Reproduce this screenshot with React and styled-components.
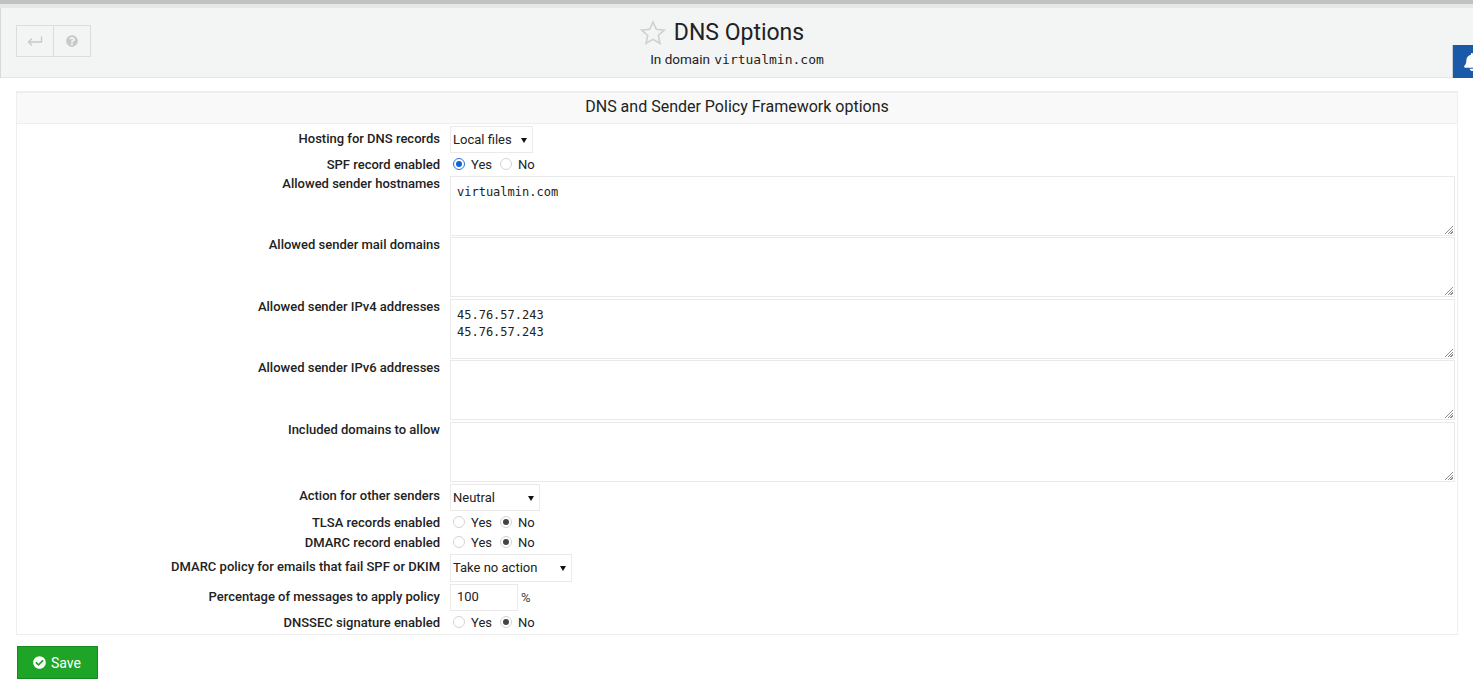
import React from "react";
import styled, { createGlobalStyle } from "styled-components";
import { FaBell, FaCheckCircle, FaQuestionCircle } from "react-icons/fa";

const Global = createGlobalStyle`
  html, body { margin: 0; padding: 0; background: #fff; overflow: hidden; height: 690px; }
  body { font-family: Roboto, "Liberation Sans", sans-serif; font-size: 13px; color: #222; }
  * { box-sizing: border-box; }
`;

const Page = styled.div`
  position: relative;
  width: 1473px;
  height: 690px;
  overflow: hidden;
  border-top: 4px solid #c0c2c1;
`;
const TopStrip = styled.div`
  height: 4px;
  background: #e6e7e6;
`;
const Header = styled.header`
  display: grid;
  grid-template-columns: 1fr auto 1fr;
  height: 70px;
  background: #f3f5f4;
  border-left: 1px solid #d8d9d8;
  border-bottom: 1px solid #e3e4e3;
  padding: 0 15px;
`;
const ButtonGroup = styled.div`
  display: flex;
  align-self: start;
  margin-top: 17px;
  width: 75px;
  height: 32px;
  border: 1px solid #dcdddc;
`;
const ToolButton = styled.div`
  flex: 1;
  display: flex;
  align-items: center;
  justify-content: center;
  color: #c8c9c8;
  & + & { border-left: 1px solid #dcdddc; }
`;
const TitleBlock = styled.div`
  display: flex;
  flex-direction: column;
  align-items: center;
  padding-top: 8px;
`;
const TitleLine = styled.div`
  display: flex;
  align-items: center;
  gap: 8px;
  height: 33px;
  margin-right: 30px;
`;
const Title = styled.h1`
  margin: 0;
  font-size: 23px;
  font-weight: 400;
  line-height: 33px;
  color: #222;
`;
const Subtitle = styled.div`
  margin-top: 1px;
  font-size: 13.5px;
  line-height: 18px;
  color: #222;
`;
const Mono = styled.span`
  font-family: "DejaVu Sans Mono", monospace;
  font-size: 13px;
  margin-left: 1px;
`;
const BellTab = styled.div`
  position: absolute;
  left: 1452px;
  top: 41px;
  width: 21px;
  height: 33px;
  background: #1a5aa8;
  overflow: hidden;
  color: #fff;
  border-left: 1px solid #c8cfd8;
  svg { position: absolute; left: 10px; top: 8px; }
`;
const Main = styled.main`
  padding: 13px 15px 0 16px;
`;
const Panel = styled.section`
  border: 1px solid #eeeeee;
  border-top-width: 2px;
`;
const PanelTitle = styled.h2`
  margin: 0;
  height: 31px;
  background: #f8f9f8;
  border-bottom: 1px solid #eeeeee;
  font-size: 16px;
  font-weight: 400;
  line-height: 28px;
  text-align: center;
  color: #222;
`;
const Rows = styled.div`
  display: flex;
  flex-direction: column;
  padding-top: 2px;
`;
const Row = styled.div`
  display: grid;
  grid-template-columns: 423px 1fr;
  column-gap: 10px;
  height: ${(p) => p.$h}px;
  align-items: ${(p) => (p.$top ? "start" : "center")};
`;
const Label = styled.label`
  font-weight: 500;
  font-size: 13px;
  line-height: 16px;
  text-align: right;
  color: #222;
  margin-top: ${(p) => p.$mt || 0}px;
`;
const Control = styled.div`
  display: flex;
  align-items: center;
  min-width: 0;
  padding-top: ${(p) => p.$pt || 0}px;
`;
const SelectBox = styled.div`
  position: relative;
  width: ${(p) => p.$w}px;
  height: ${(p) => p.$h || 27}px;
  &::after {
    content: "";
    position: absolute;
    right: 6px;
    top: 50%;
    margin-top: -2px;
    border-left: 3px solid transparent;
    border-right: 3px solid transparent;
    border-top: 5px solid #111;
    pointer-events: none;
  }
`;
const Select = styled.select`
  appearance: none;
  display: block;
  width: 100%;
  height: 100%;
  border: 1px solid #eaeaea;
  border-radius: 0;
  background: #fff;
  font-family: Roboto, sans-serif;
  font-size: 13px;
  color: #222;
  padding: 0 0 ${(p) => p.$pb || 0}px 2px;
  outline: none;
`;
const TextWrap = styled.div`
  position: relative;
  width: 1005px;
  height: 60px;
  &::after {
    content: "";
    position: absolute;
    right: 2px;
    bottom: 2px;
    width: 10px;
    height: 10px;
    background: repeating-linear-gradient(135deg, #8e8e8e 0 1px, #ffffff 1px 2px);
    clip-path: polygon(100% 0, 100% 100%, 0 100%);
    pointer-events: none;
  }
`;
const TextArea = styled.textarea`
  display: block;
  width: 100%;
  height: 100%;
  padding: 7px 6px;
  border: 1px solid #eaeaea;
  border-radius: 0;
  font-family: "DejaVu Sans Mono", monospace;
  font-size: 12px;
  line-height: 17px;
  color: #222;
  resize: none;
  outline: none;
  background: #fff;
`;
const Radio = styled.input.attrs({ type: "radio" })`
  appearance: none;
  width: 12px;
  height: 12px;
  margin: 0 0 0 ${(p) => p.$ml || 0}px;
  border-radius: 50%;
  border: 1px solid ${(p) => (p.checked && p.$blue ? "#2a74d8" : "#d4d4d4")};
  background: #fff;
  position: relative;
  &:checked::after {
    content: "";
    position: absolute;
    left: 2px;
    top: 2px;
    width: 6px;
    height: 6px;
    border-radius: 50%;
    background: ${(p) => (p.$blue ? "#0a66d8" : "#444")};
  }
`;
const RadioText = styled.span`
  margin-left: 6px;
  font-size: 13px;
  color: #222;
`;
const Choices = styled(Control)`
  padding-left: 3px;
  margin-top: ${(p) => p.$mt || 0}px;
`;
const NumberInput = styled.input`
  width: 68px;
  height: 27px;
  border: 1px solid #eaeaea;
  border-radius: 0;
  padding: 0 6px 3px;
  font-family: Roboto, sans-serif;
  font-size: 13px;
  color: #222;
  outline: none;
`;
const Unit = styled.span`
  margin-left: 3px;
  color: #444;
  font-size: 13px;
`;
const SaveButton = styled.button`
  display: flex;
  align-items: center;
  gap: 5px;
  width: 81px;
  height: 33px;
  margin: 11px 0 0 1px;
  padding: 0 0 0 15px;
  background: #1ea426;
  border: 1px solid #178a1e;
  border-radius: 0;
  color: #fff;
  font-family: Roboto, sans-serif;
  font-size: 14px;
`;

const YesNo = ({ name, yes, blue, mt }) => (
  <Choices $mt={mt}>
    <Radio name={name} checked={yes} readOnly $blue={blue} />
    <RadioText>Yes</RadioText>
    <Radio name={name} checked={!yes} readOnly $ml={8} />
    <RadioText>No</RadioText>
  </Choices>
);

const Area = ({ value }) => (
  <TextWrap>
    <TextArea defaultValue={value} />
  </TextWrap>
);

export default function App() {
  return (
    <Page>
      <Global />
      <TopStrip />
      <Header>
        <ButtonGroup>
          <ToolButton>
            <svg width="16" height="12" viewBox="0 0 16 12" fill="none" stroke="#c8c9c8" strokeWidth="1.3">
              <path d="M14.5 1.5v5.5H2" />
              <path d="M5 3.5 1.5 7 5 10.5" />
            </svg>
          </ToolButton>
          <ToolButton>
            <FaQuestionCircle size={12} />
          </ToolButton>
        </ButtonGroup>
        <TitleBlock>
          <TitleLine>
            <svg width="26" height="26" viewBox="0 0 26 26" fill="none" stroke="#cfd0cf" strokeWidth="1.6">
              <path d="M13 2l3.3 7.3 7.9.9-5.9 5.3 1.7 7.8L13 19.3l-7 4 1.7-7.8-5.9-5.3 7.9-.9z" />
            </svg>
            <Title>DNS Options</Title>
          </TitleLine>
          <Subtitle>
            In domain <Mono>virtualmin.com</Mono>
          </Subtitle>
        </TitleBlock>
        <div />
      </Header>
      <BellTab>
        <FaBell size={18} />
      </BellTab>
      <Main>
        <Panel>
          <PanelTitle>DNS and Sender Policy Framework options</PanelTitle>
          <Rows>
            <Row $h={28} $top>
              <Label $mt={5}>Hosting for DNS records</Label>
              <Control>
                <SelectBox $w={83}><Select><option>Local files</option></Select></SelectBox>
              </Control>
            </Row>
            <Row $h={22}>
              <Label>SPF record enabled</Label>
              <YesNo name="spf" yes blue mt={-2} />
            </Row>
            <Row $h={61} $top>
              <Label>Allowed sender hostnames</Label>
              <Area value="virtualmin.com" />
            </Row>
            <Row $h={62} $top>
              <Label>Allowed sender mail domains</Label>
              <Area />
            </Row>
            <Row $h={61} $top>
              <Label>Allowed sender IPv4 addresses</Label>
              <Area value={"45.76.57.243\n45.76.57.243"} />
            </Row>
            <Row $h={62} $top>
              <Label>Allowed sender IPv6 addresses</Label>
              <Area />
            </Row>
            <Row $h={62} $top>
              <Label>Included domains to allow</Label>
              <Area />
            </Row>
            <Row $h={28} $top>
              <Label $mt={4}>Action for other senders</Label>
              <Control>
                <SelectBox $w={90}><Select><option>Neutral</option></Select></SelectBox>
              </Control>
            </Row>
            <Row $h={20}>
              <Label $mt={2}>TLSA records enabled</Label>
              <YesNo name="tlsa" yes={false} />
            </Row>
            <Row $h={20}>
              <Label $mt={2}>DMARC record enabled</Label>
              <YesNo name="dmarc" yes={false} />
            </Row>
            <Row $h={30} $top>
              <Label $mt={7}>DMARC policy for emails that fail SPF or DKIM</Label>
              <Control $pt={2}>
                <SelectBox $w={122} $h={28}><Select $pb={2}><option>Take no action</option></Select></SelectBox>
              </Control>
            </Row>
            <Row $h={30} $top>
              <Label $mt={7}>Percentage of messages to apply policy</Label>
              <Control $pt={2}>
                <NumberInput defaultValue="100" />
                <Unit>%</Unit>
              </Control>
            </Row>
            <Row $h={22}>
              <Label>DNSSEC signature enabled</Label>
              <YesNo name="dnssec" yes={false} mt={-2} />
            </Row>
          </Rows>
        </Panel>
        <SaveButton>
          <FaCheckCircle size={13} />
          Save
        </SaveButton>
      </Main>
    </Page>
  );
}
